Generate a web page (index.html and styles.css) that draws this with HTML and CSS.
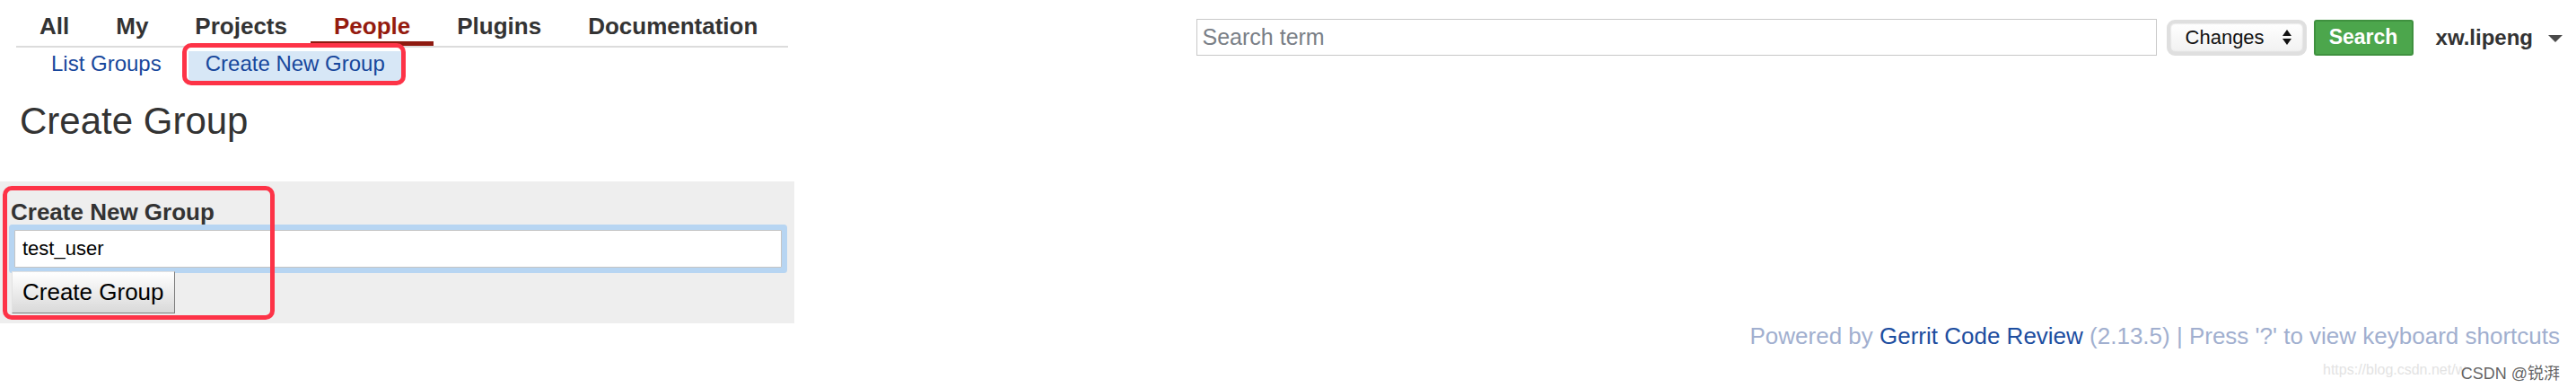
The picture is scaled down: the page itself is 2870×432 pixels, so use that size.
FILE: index.html
```html
<!DOCTYPE html>
<html lang="en">
<head>
<meta charset="utf-8">
<title>Create Group</title>
<link rel="stylesheet" href="styles.css">
</head>
<body>
<div class="page">
  <header class="topbar">
    <div class="navs">
      <nav class="menu">
        <a class="menu-item">All</a>
        <a class="menu-item">My</a>
        <a class="menu-item">Projects</a>
        <a class="menu-item active">People</a>
        <a class="menu-item">Plugins</a>
        <a class="menu-item">Documentation</a>
      </nav>
      <nav class="submenu">
        <a class="sub-item">List Groups</a>
        <a class="sub-item selected">Create New Group</a>
      </nav>
    </div>
    <form class="searchbar">
      <input class="search-input" type="text" placeholder="Search term">
      <div class="select">
        <span class="select-text">Changes</span>
        <svg class="select-arrows" width="10" height="17" viewBox="0 0 10 17"><path d="M5 0 L10 7 L0 7 Z M0 10 L10 10 L5 17 Z" fill="#111"/></svg>
      </div>
      <button class="search-btn" type="button">Search</button>
      <span class="user">xw.lipeng</span>
      <svg class="user-caret" width="16" height="8" viewBox="0 0 16 8"><path d="M0 0 L16 0 L8 8 Z" fill="#4a4a4a"/></svg>
    </form>
  </header>

  <h1 class="title">Create Group</h1>

  <section class="panel">
    <div class="panel-label">Create New Group</div>
    <input class="group-name" type="text" value="test_user">
    <button class="create-btn" type="button">Create Group</button>
  </section>

  <footer class="footer">Powered by <a class="footer-link">Gerrit Code Review</a> (2.13.5) | Press '?' to view keyboard shortcuts</footer>
</div>

<div class="mark mark-tab"></div>
<div class="mark mark-form"></div>
<div class="watermark"><span class="wm-url">https://blog.csdn.net/w</span><span class="wm-name">CSDN @锐湃</span></div>
</body>
</html>
```

FILE: styles.css
```css
* { box-sizing: border-box; }

html, body {
  margin: 0;
  padding: 0;
  background: #ffffff;
}

body {
  font-family: "Liberation Sans", Arial, "Noto Sans CJK SC", sans-serif;
  color: #333333;
  width: 2870px;
  height: 432px;
  overflow: hidden;
  position: relative;
}

.topbar {
  display: flex;
  align-items: flex-start;
}

.navs {
  width: 886px;
}

.menu {
  display: flex;
  margin-left: 18px;
  width: 860px;
  padding-top: 14px;
  border-bottom: 2px solid #dcdcdc;
}

.menu-item {
  display: block;
  padding: 0 26px 2px;
  font-size: 26px;
  font-weight: bold;
  line-height: 30px;
  color: #333333;
  border-bottom: 5px solid transparent;
}

.menu-item:first-child {
  padding-left: 26px;
}

.menu-item.active {
  color: #951b0f;
  border-bottom-color: #8e1a10;
}

.submenu {
  display: flex;
  gap: 11px;
  margin: 4px 0 0 38px;
}

.sub-item {
  display: block;
  padding: 0 19px 5px;
  font-size: 24px;
  line-height: 28px;
  color: #17479c;
}

.sub-item.selected {
  background: #d7e7f6;
}

.searchbar {
  margin: 0 0 0 auto;
  padding: 21px 15px 0 0;
  display: flex;
  align-items: center;
}

.search-input {
  width: 1070px;
  height: 41px;
  border: 1px solid #c8c8c8;
  padding: 0 6px;
  font-family: "Liberation Sans", Arial, sans-serif;
  font-size: 25px;
  color: #333;
  outline: none;
  margin: 0;
}

.search-input::placeholder {
  color: #7a7f87;
}

.select {
  margin-left: 11px;
  width: 156px;
  height: 40px;
  border: 4px solid #dfdfdf;
  border-radius: 9px;
  background: linear-gradient(#ffffff, #f1f1f1);
  box-shadow: inset 0 0 2px #bdbdbd;
  display: flex;
  align-items: center;
  padding: 0 13px 0 17px;
}

.select-text {
  font-size: 22px;
  color: #111;
  flex: 1;
}

.select-arrows {
  display: block;
}

.search-btn {
  margin-left: 8px;
  width: 111px;
  height: 40px;
  background: #4ca64c;
  border: 2px solid #3f913f;
  border-radius: 3px;
  color: #ffffff;
  font-family: "Liberation Sans", Arial, sans-serif;
  font-size: 23px;
  font-weight: bold;
  padding: 0;
}

.user {
  margin-left: 25px;
  font-size: 24px;
  font-weight: bold;
  color: #333333;
}

.user-caret {
  margin-left: 17px;
  margin-top: 3px;
  display: block;
}

.title {
  margin: 21px 0 0 0;
  padding-left: 22px;
  font-size: 42px;
  font-weight: normal;
  line-height: 48px;
  color: #333333;
}

.panel {
  margin-top: 43px;
  width: 885px;
  height: 158px;
  background: #eeeeee;
  padding: 19px 0 11px 0;
}

.panel-label {
  margin-left: 12px;
  font-size: 26px;
  font-weight: bold;
  line-height: 30px;
  color: #333333;
}

.group-name {
  display: block;
  margin: 5px 0 0 16px;
  width: 855px;
  height: 42px;
  border: 1px solid #c4c4c4;
  border-radius: 1px;
  box-shadow: 0 0 0 6px #b7d5f2;
  padding: 0 8px;
  font-family: "Liberation Sans", Arial, sans-serif;
  font-size: 22px;
  color: #000;
  outline: none;
}

.create-btn {
  display: block;
  margin: 4px 0 0 13px;
  height: 47px;
  padding: 0 11px;
  border: 1px solid;
  border-color: #e2e2e2 #7d7d7d #7d7d7d #e2e2e2;
  background: linear-gradient(#ffffff, #d9d9d9);
  font-family: "Liberation Sans", Arial, sans-serif;
  font-size: 26px;
  color: #000;
}

.footer {
  margin: 0;
  padding-right: 18px;
  text-align: right;
  font-size: 26px;
  line-height: 28px;
  color: #a1afcf;
}

.footer-link {
  color: #1c4d9f;
}

.mark {
  position: absolute;
  border: 5px solid #fd3347;
  border-radius: 10px;
}

.mark-tab {
  left: 203px;
  top: 48px;
  width: 249px;
  height: 47px;
}

.mark-form {
  left: 3px;
  top: 207px;
  width: 303px;
  height: 149px;
}

.watermark {
  position: absolute;
  right: 18px;
  top: 401px;
  height: 24px;
  width: 264px;
}

.wm-url {
  position: absolute;
  left: 0;
  top: 2px;
  font-size: 16px;
  color: #e3e3e3;
  white-space: nowrap;
}

.wm-name {
  position: absolute;
  right: 0;
  top: 0;
  font-size: 18px;
  color: rgba(70, 70, 70, 0.85);
  white-space: nowrap;
}
```
